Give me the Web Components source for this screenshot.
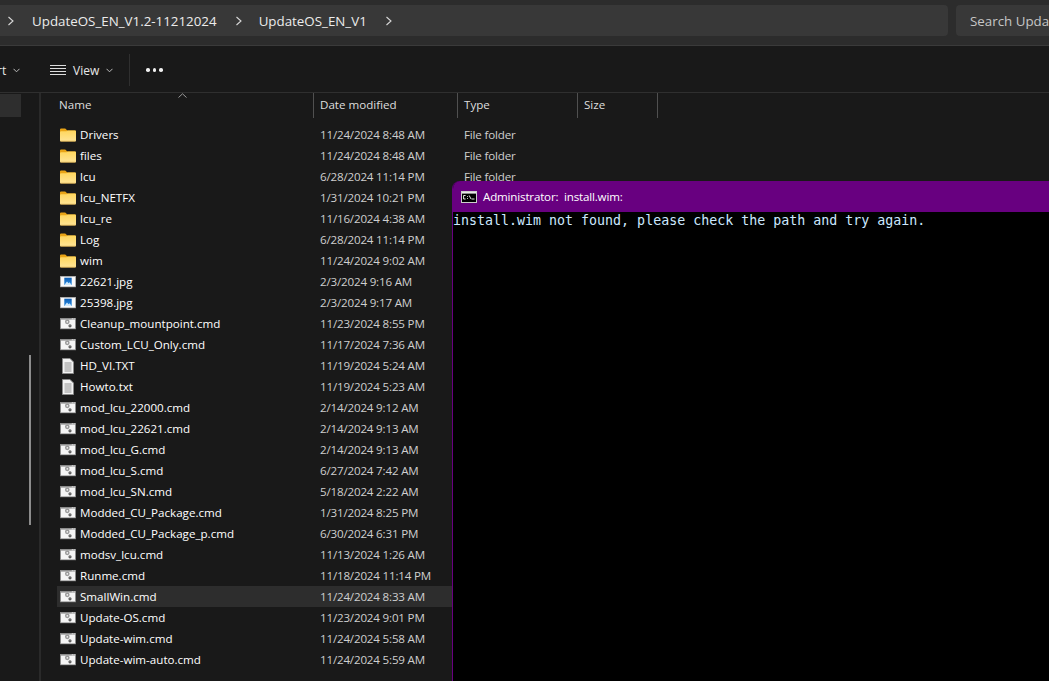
<!DOCTYPE html>
<html>
<head>
<meta charset="utf-8">
<style>
  html, body { margin: 0; padding: 0; height: 100%; overflow: hidden; background: #191919; }
  body { font-family: "Open Sans", "Noto Sans", sans-serif; }
  explorer-app { height: 681px; width: 1049px; }
</style>
</head>
<body>
<explorer-app>
  <address-bar slot="top"></address-bar>
  <tool-bar slot="top"></tool-bar>
  <file-list slot="list"></file-list>
  <console-window slot="console" title-text="Administrator:  install.wim:">install.wim not found, please check the path and try again.</console-window>
</explorer-app>
<script>
const UI_FONT = '"Open Sans", "Noto Sans", sans-serif';

const files = [
  ['folder', 'Drivers', '11/24/2024 8:48 AM', 'File folder'],
  ['folder', 'files', '11/24/2024 8:48 AM', 'File folder'],
  ['folder', 'lcu', '6/28/2024 11:14 PM', 'File folder'],
  ['folder', 'lcu_NETFX', '1/31/2024 10:21 PM', ''],
  ['folder', 'lcu_re', '11/16/2024 4:38 AM', ''],
  ['folder', 'Log', '6/28/2024 11:14 PM', ''],
  ['folder', 'wim', '11/24/2024 9:02 AM', ''],
  ['jpg', '22621.jpg', '2/3/2024 9:16 AM', ''],
  ['jpg', '25398.jpg', '2/3/2024 9:17 AM', ''],
  ['cmd', 'Cleanup_mountpoint.cmd', '11/23/2024 8:55 PM', ''],
  ['cmd', 'Custom_LCU_Only.cmd', '11/17/2024 7:36 AM', ''],
  ['txt', 'HD_VI.TXT', '11/19/2024 5:24 AM', ''],
  ['txt', 'Howto.txt', '11/19/2024 5:23 AM', ''],
  ['cmd', 'mod_lcu_22000.cmd', '2/14/2024 9:12 AM', ''],
  ['cmd', 'mod_lcu_22621.cmd', '2/14/2024 9:13 AM', ''],
  ['cmd', 'mod_lcu_G.cmd', '2/14/2024 9:13 AM', ''],
  ['cmd', 'mod_lcu_S.cmd', '6/27/2024 7:42 AM', ''],
  ['cmd', 'mod_lcu_SN.cmd', '5/18/2024 2:22 AM', ''],
  ['cmd', 'Modded_CU_Package.cmd', '1/31/2024 8:25 PM', ''],
  ['cmd', 'Modded_CU_Package_p.cmd', '6/30/2024 6:31 PM', ''],
  ['cmd', 'modsv_lcu.cmd', '11/13/2024 1:26 AM', ''],
  ['cmd', 'Runme.cmd', '11/18/2024 11:14 PM', ''],
  ['cmd', 'SmallWin.cmd', '11/24/2024 8:33 AM', '', true],
  ['cmd', 'Update-OS.cmd', '11/23/2024 9:01 PM', ''],
  ['cmd', 'Update-wim.cmd', '11/24/2024 5:58 AM', ''],
  ['cmd', 'Update-wim-auto.cmd', '11/24/2024 5:59 AM', '']
];

const gear = (x, y, r, c, w) => `<circle cx="${x}" cy="${y}" r="${r}" fill="none" stroke="${c}" stroke-width="${w}"/>`;

// one gradient per svg, ids are private to each shadow root
const icons = {
  folder: `<svg width="16" height="16" viewBox="0 0 16 16"><defs><linearGradient id="fb" x1="0" y1="0" x2="0" y2="1"><stop offset="0" stop-color="#ffd65c"/><stop offset="1" stop-color="#ffe597"/></linearGradient></defs><path d="M0 2.6Q0 1.5 1.1 1.5H5.2L7.4 3.5H15Q16 3.5 16 4.5V6H0Z" fill="#e9a416"/><path d="M0 5.2Q0 4.2 1 4.2H6.6L7.6 3.6H15Q16 3.6 16 4.6V13.5Q16 14.5 15 14.5H1Q0 14.5 0 13.5Z" fill="url(#fb)"/><path d="M.5 14.2H15.5" stroke="#d9a53a" stroke-width=".6"/></svg>`,
  jpg: `<svg width="16" height="16" viewBox="0 0 16 16"><defs><linearGradient id="jb" x1="0" y1="0" x2="0" y2="1"><stop offset="0" stop-color="#0f5fb5"/><stop offset="1" stop-color="#2a8be0"/></linearGradient></defs><rect x=".3" y="2.3" width="15.4" height="10.6" fill="#fafafa" stroke="#a8a8a8" stroke-width=".6"/><rect x="4.3" y="3.7" width="7.4" height="7.3" fill="url(#jb)"/><path d="M4.3 11L7 7.4L8.6 9.2L9.6 8.2L11.7 11Z" fill="#cfe9fb"/></svg>`,
  cmd: `<svg width="16" height="16" viewBox="0 0 16 16"><rect x="0" y="2" width="16" height="11.2" fill="#8c8c8c"/><rect x="1" y="3.6" width="14" height="8.8" fill="#f5f5f5"/><path d="M11.8 2.8H12.8M13.6 2.8H14.6" stroke="#f0f0f0"/>${gear(7.3, 5.8, 1.6, '#9a9a9a', 1.5)}${gear(10, 9.8, 1, '#5a5a5a', 1.2)}</svg>`,
  txt: `<svg width="16" height="16" viewBox="0 0 16 16"><path d="M2.5 .5H10L13.5 4V15.5H2.5Z" fill="#f2f2f2" stroke="#8a8a8a"/><path d="M4.5 5H11.5M4.5 7H11.5M4.5 9H11.5M4.5 11H11.5M4.5 13H11.5" stroke="#7c7c7c" stroke-width=".8"/></svg>`
};

// outer frame: top chrome, then the sidebar sliver and the file list
class ExplorerApp extends HTMLElement {
  connectedCallback() {
    this.attachShadow({mode: 'open'}).innerHTML = `
      <style>
        :host { display: flex; flex-direction: column; position: relative; overflow: hidden; background: #191919; color: #fff; font-family: ${UI_FONT}; }
        .body { flex: 1; display: flex; min-height: 0; }
        .side { width: 39px; flex: none; border-right: 2px solid #2a2a2a; position: relative; padding-top: 1px; }
        .sel { width: 21px; height: 23px; background: #2e2e2e; }
        .thumb { position: absolute; left: 29px; top: 262px; width: 2px; height: 170px; background: #8c8c8c; }
      </style>
      <slot name="top"></slot>
      <div class="body">
        <div class="side"><div class="sel"></div><div class="thumb"></div></div>
        <slot name="list"></slot>
      </div>
      <slot name="console"></slot>`;
  }
}

class AddressBar extends HTMLElement {
  connectedCallback() {
    const chev = `<svg width="8" height="10" viewBox="0 0 8 10"><path d="M1.5 1L6 5L1.5 9" fill="none" stroke="#d8d8d8" stroke-width="1.1"/></svg>`;
    this.attachShadow({mode: 'open'}).innerHTML = `
      <style>
        :host { display: flex; height: 46px; box-sizing: border-box; padding: 5px 0 9px; gap: 8px; background: #2c2c2c; border-bottom: 1px solid #3a3a3a; font-size: 13.35px; }
        .crumbs { width: 948px; box-sizing: border-box; flex: none; display: flex; align-items: center; background: #383838; border-radius: 0 4px 4px 0; color: #ececec; padding-left: 7px; }
        .crumbs svg { flex: none; display: block; }
        .crumbs span { white-space: nowrap; }
        .a { margin: 0 18px 0 17px; }
        .b { margin: 0 18px 0 16px; }
        .search { flex: 1; display: flex; align-items: center; padding-left: 14px; background: #383838; border-radius: 4px 0 0 4px; color: #c6c6c6; white-space: nowrap; overflow: hidden; }
      </style>
      <div class="crumbs">
        ${chev}
        <span class="a">UpdateOS_EN_V1.2-11212024</span>
        ${chev}
        <span class="b">UpdateOS_EN_V1</span>
        ${chev}
      </div>
      <div class="search">Search UpdateOS_EN_V1</div>`;
  }
}

class ToolBar extends HTMLElement {
  connectedCallback() {
    const caret = `<svg width="7" height="5" viewBox="0 0 7 5"><path d="M.5 .8L3.5 3.8L6.5 .8" fill="none" stroke="#bdbdbd"/></svg>`;
    this.attachShadow({mode: 'open'}).innerHTML = `
      <style>
        :host { display: flex; align-items: center; height: 47px; box-sizing: border-box; padding-top: 2px; border-bottom: 1px solid #2f2f2f; background: #191919; font-size: 12px; color: #e8e8e8; overflow: hidden; }
        .sort { display: flex; align-items: center; gap: 7px; margin-left: -3px; width: 53px; flex: none; }
        .view { display: flex; align-items: center; gap: 7px; width: 79px; flex: none; }
        .sep { width: 1px; height: 32px; background: #2f2f2f; flex: none; }
        .more { margin-left: 16px; display: flex; gap: 3px; }
        .more i { width: 3.5px; height: 3.5px; border-radius: 50%; background: #f0f0f0; display: block; }
      </style>
      <div class="sort"><span>rt</span>${caret}</div>
      <div class="view">
        <svg width="16" height="11" viewBox="0 0 16 11"><path d="M0 .5H16M0 3.5H16M0 6.5H16M0 9.5H16" stroke="#dcdcdc" stroke-width="1"/></svg>
        <span>View</span>${caret}
      </div>
      <div class="sep"></div>
      <div class="more"><i></i><i></i><i></i></div>`;
  }
}

class FileRow extends HTMLElement {
  connectedCallback() {
    const [kind, name, date, type, hot] = this.data;
    this.attachShadow({mode: 'open'}).innerHTML = `
      <style>
        :host { display: grid; grid-template-columns: 263px 144px 1fr; align-items: center; height: 21px; font-size: 11.6px; color: #fff; white-space: nowrap; background: ${hot ? '#2d2d2d' : 'transparent'}; }
        .name { display: flex; align-items: center; gap: 4px; padding-left: 3px; }
        svg { flex: none; display: block; }
        .date, .type { color: #cfcfcf; letter-spacing: -.18px; }
      </style>
      <div class="name">${icons[kind]}<span>${name}</span></div>
      <div class="date">${date}</div>
      <div class="type">${type}</div>`;
  }
}
customElements.define('file-row', FileRow);

class FileList extends HTMLElement {
  connectedCallback() {
    const root = this.attachShadow({mode: 'open'});
    root.innerHTML = `
      <style>
        :host { display: flex; flex-direction: column; flex: 1; min-width: 0; position: relative; font-size: 11.6px; }
        .head { display: grid; grid-template-columns: 273px 144px 120px 80px; width: max-content; height: 25px; color: #dedede; line-height: 24px; }
        .head div { padding-left: 6px; border-right: 1px solid #505050; }
        .head div:first-child { padding-left: 18px; }
        .caret { position: absolute; left: 137px; top: 0; }
        .rows { padding: 6px 0 0 16px; display: flex; flex-direction: column; }
      </style>
      <div class="head"><div>Name</div><div>Date modified</div><div>Type</div><div>Size</div></div>
      <svg class="caret" width="9" height="5" viewBox="0 0 9 5"><path d="M.5 4.5L4.5 .8L8.5 4.5" fill="none" stroke="#9a9a9a"/></svg>
      <div class="rows"></div>`;
    const rows = root.querySelector('.rows');
    files.forEach(f => {
      const r = document.createElement('file-row');
      r.data = f;
      rows.appendChild(r);
    });
  }
}

// the console sits over the explorer, like a desktop window
class ConsoleWindow extends HTMLElement {
  connectedCallback() {
    this.attachShadow({mode: 'open'}).innerHTML = `
      <style>
        :host { position: absolute; left: 452px; top: 181px; right: 0; bottom: 0; display: flex; flex-direction: column; background: #000; border-left: 1px solid #680080; border-top-left-radius: 8px; overflow: hidden; }
        .title { height: 31px; flex: none; display: flex; align-items: center; gap: 6px; padding-left: 8px; background: #680080; color: #fff; font: 11.6px ${UI_FONT}; letter-spacing: -.18px; white-space: pre; }
        .out { color: #cce8ff; font: 13.3px/17px "DejaVu Sans Mono", "Liberation Mono", monospace; white-space: pre; }
      </style>
      <div class="title">
        <svg width="16" height="12" viewBox="0 0 16 12"><rect x=".5" y=".5" width="15" height="11" fill="#000" stroke="#ccc"/><rect x="1" y="1" width="14" height="1.6" fill="#e8e8e8"/><path d="M4.6 4.5H2.6V8H4.6M6.5 5V5.8M6.5 7.2V8M8.2 4.5L10 8M10.5 8H13.5" fill="none" stroke="#fff" stroke-width=".9"/></svg>
        <span>${this.getAttribute('title-text')}</span>
      </div>
      <div class="out"><slot></slot></div>`;
  }
}

customElements.define('address-bar', AddressBar);
customElements.define('tool-bar', ToolBar);
customElements.define('file-list', FileList);
customElements.define('console-window', ConsoleWindow);
customElements.define('explorer-app', ExplorerApp);
</script>
</body>
</html>
